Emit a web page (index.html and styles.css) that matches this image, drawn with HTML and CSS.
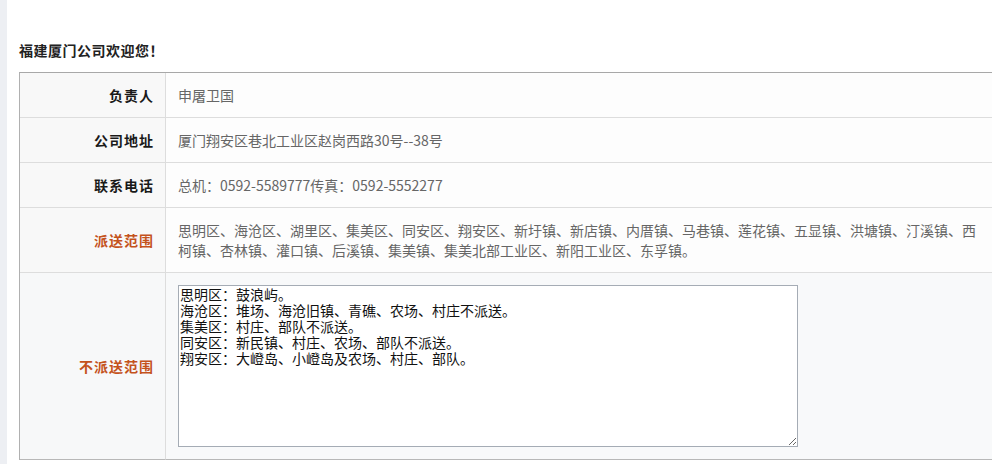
FILE: index.html
```html
<!DOCTYPE html>
<html lang="zh-CN">
<head>
<meta charset="utf-8">
<title>福建厦门公司</title>
<link rel="stylesheet" href="styles.css">
</head>
<body>
<div class="page">
  <div class="side-stripe"></div>
  <main class="content">
    <h1 class="welcome">福建厦门公司欢迎您！</h1>
    <table class="info">
      <colgroup><col class="col-label"><col class="col-value"></colgroup>
      <tbody>
        <tr class="row-short">
          <th class="label">负责人</th>
          <td class="value">申屠卫国</td>
        </tr>
        <tr class="row-short">
          <th class="label">公司地址</th>
          <td class="value">厦门翔安区巷北工业区赵岗西路30号--38号</td>
        </tr>
        <tr class="row-short">
          <th class="label">联系电话</th>
          <td class="value">总机：0592-5589777传真：0592-5552277</td>
        </tr>
        <tr class="row-range">
          <th class="label label-accent">派送范围</th>
          <td class="value value-multi">思明区、海沧区、湖里区、集美区、同安区、翔安区、新圩镇、新店镇、内厝镇、马巷镇、莲花镇、五显镇、洪塘镇、汀溪镇、西柯镇、杏林镇、灌口镇、后溪镇、集美镇、集美北部工业区、新阳工业区、东孚镇。</td>
        </tr>
        <tr class="row-area">
          <th class="label label-accent">不派送范围</th>
          <td class="value value-area"><textarea class="note" rows="10">思明区：鼓浪屿。
海沧区：堆场、海沧旧镇、青礁、农场、村庄不派送。
集美区：村庄、部队不派送。
同安区：新民镇、村庄、农场、部队不派送。
翔安区：大嶝岛、小嶝岛及农场、村庄、部队。</textarea></td>
        </tr>
      </tbody>
    </table>
  </main>
</div>
</body>
</html>
```

FILE: styles.css
```css
html, body {
  margin: 0;
  padding: 0;
  background: #ffffff;
  overflow: hidden;
}

body {
  font-family: "Noto Sans CJK SC", "Liberation Sans", sans-serif;
  color: #333333;
}

.page {
  display: flex;
  min-height: 464px;
}

.side-stripe {
  flex: 0 0 7px;
  background: #edeff3;
}

.content {
  flex: 1 1 auto;
  padding: 40px 0 0 12px;
  min-width: 0;
}

.welcome {
  margin: 0 0 12px 0;
  font-size: 14px;
  line-height: 20px;
  font-weight: bold;
  letter-spacing: 0.5px;
  color: #222222;
}

.info {
  border-collapse: separate;
  border-spacing: 0;
  table-layout: fixed;
  width: 980px;
  border-top: 1px solid #a8a8a8;
  border-left: 1px solid #b0b0b0;
}

.col-label {
  width: 146px;
}

.label {
  text-align: right;
  vertical-align: middle;
  padding: 0 11px 0 0;
  font-size: 14px;
  font-weight: bold;
  letter-spacing: 1px;
  color: #1a1a1a;
  background: #f8f8f8;
  border-right: 1px solid #dddddd;
  border-bottom: 1px solid #dddddd;
}

.label-accent {
  color: #c4521c;
}

.value {
  vertical-align: middle;
  padding: 0 12px;
  font-size: 14px;
  line-height: 20px;
  color: #666666;
  background: #fdfdfd;
  border-bottom: 1px solid #dddddd;
}

.row-short .label,
.row-short .value {
  height: 44px;
}

.row-range .label {
  height: 64px;
}

.value-multi {
  padding-top: 12px;
  padding-bottom: 12px;
}

.row-area .label {
  background: #f7f8f9;
  border-bottom-color: #b8b8b8;
}

.row-area .value {
  background: #f8f9fa;
  padding-top: 12px;
  padding-bottom: 12px;
  border-bottom-color: #b8b8b8;
}

.note {
  display: block;
  box-sizing: border-box;
  width: 620px;
  height: 162px;
  margin: 0;
  padding: 0 1px;
  border: 1px solid #a5acb5;
  background: #ffffff;
  font-family: "Noto Sans CJK SC", "Liberation Mono", monospace;
  font-size: 14px;
  line-height: 16px;
  color: #111111;
  resize: both;
}
```
